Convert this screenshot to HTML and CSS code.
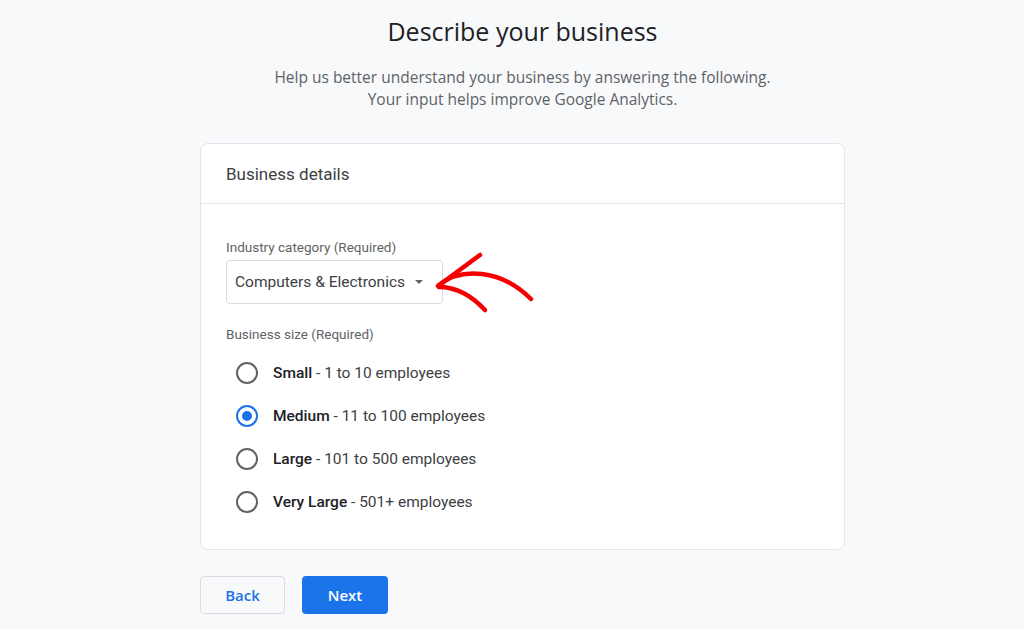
FILE: index.html
```html
<!DOCTYPE html>
<html lang="en">
<head>
    <meta charset="UTF-8">
    <meta name="viewport" content="width=device-width, initial-scale=1.0">
    <title>Describe your business</title>
    <link rel="stylesheet" href="styles.css">
</head>
<body>
    <div class="page">
        <!-- Intro -->
        <header class="intro">
            <h1>Describe your business</h1>
            <p>Help us better understand your business by answering the following.<br>Your input helps improve Google Analytics.</p>
        </header>

        <!-- Business details card -->
        <section class="card">
            <div class="card-header">Business details</div>
            <div class="card-body">
                <div class="field-label">Industry category (Required)</div>
                <div class="select-row">
                    <div class="select-box">
                        <span>Computers &amp; Electronics</span>
                        <span class="caret"></span>
                    </div>
                    <svg class="annotation" width="110" height="70" viewBox="0 0 110 70">
                        <path d="M49 8 L7 39" />
                        <path d="M8 38 C 30 20, 70 22, 100 52" />
                        <path d="M8 40 C 25 40, 40 48, 54 63" />
                    </svg>
                </div>

                <div class="field-label size-label">Business size (Required)</div>
                <ul class="radio-list">
                    <li class="radio-item"><span class="radio"></span><span><b>Small</b> - 1 to 10 employees</span></li>
                    <li class="radio-item"><span class="radio checked"></span><span><b>Medium</b> - 11 to 100 employees</span></li>
                    <li class="radio-item"><span class="radio"></span><span><b>Large</b> - 101 to 500 employees</span></li>
                    <li class="radio-item"><span class="radio"></span><span><b>Very Large</b> - 501+ employees</span></li>
                </ul>
            </div>
        </section>

        <!-- Actions -->
        <div class="actions">
            <button class="btn btn-back">Back</button>
            <button class="btn btn-next">Next</button>
        </div>
    </div>
</body>
</html>
```

FILE: styles.css
```css
/* General */
body {
    margin: 0;
    background-color: #f8f9fa;
    font-family: Roboto, 'Noto Sans', sans-serif;
    color: #202124;
}

.page {
    width: 645px;
    margin-left: calc(50% - 312px);
    padding-top: 13px;
}

/* Intro */
.intro {
    text-align: center;
}

.intro h1 {
    margin: 0;
    font-family: 'Open Sans', Roboto, sans-serif;
    font-size: 25px;
    font-weight: 400;
    line-height: 36px;
    color: #202124;
}

.intro p {
    margin: 17px 0 0;
    font-family: 'Open Sans', Roboto, sans-serif;
    font-size: 15.5px;
    line-height: 22px;
    color: #5f6368;
}

/* Card */
.card {
    margin-top: 33px;
    background-color: #fff;
    border: 1px solid #e3e5e8;
    border-radius: 8px;
}

.card-header {
    padding: 20px 25px 19px;
    font-size: 17px;
    line-height: 20px;
    color: #3c4043;
    border-bottom: 1px solid #e3e5e8;
}

.card-body {
    padding: 35px 25px 26px;
}

.field-label {
    font-size: 13.5px;
    line-height: 16px;
    color: #5f6368;
}

.select-row {
    display: flex;
    align-items: flex-start;
    margin-top: 5px;
}

.select-box {
    display: flex;
    align-items: center;
    gap: 10px;
    height: 42px;
    padding: 0 19px 0 8px;
    border: 1px solid #dadce0;
    border-radius: 4px;
    font-size: 15.5px;
    color: #3c4043;
}

.caret {
    width: 0;
    height: 0;
    border-left: 4px solid transparent;
    border-right: 4px solid transparent;
    border-top: 4px solid #5f6368;
}

.annotation {
    margin: -13px 0 0 -12px;
}

.annotation path {
    fill: none;
    stroke: #f40000;
    stroke-width: 4.5;
    stroke-linecap: round;
}

.size-label {
    margin-top: 9px;
}

/* Radios */
.radio-list {
    list-style-type: none;
    margin: 9px 0 0;
    padding: 0;
}

.radio-item {
    display: flex;
    align-items: center;
    gap: 15px;
    height: 43px;
    padding-left: 10px;
    font-size: 15.5px;
    color: #3c4043;
}

.radio-item b {
    font-weight: 500;
    color: #202124;
}

.radio {
    box-sizing: border-box;
    width: 22px;
    height: 22px;
    border: 2px solid #5f6368;
    border-radius: 50%;
    display: flex;
    align-items: center;
    justify-content: center;
}

.radio.checked {
    border-color: #1a73e8;
}

.radio.checked::after {
    content: '';
    width: 10px;
    height: 10px;
    border-radius: 50%;
    background-color: #1a73e8;
}

/* Actions */
.actions {
    display: flex;
    gap: 17px;
    margin-top: 26px;
}

.btn {
    height: 38px;
    border-radius: 4px;
    font-family: 'Open Sans', Roboto, sans-serif;
    font-size: 15px;
    font-weight: 600;
    cursor: pointer;
}

.btn-back {
    width: 85px;
    background-color: #f8f9fa;
    border: 1px solid #dadce0;
    color: #1a73e8;
}

.btn-next {
    width: 86px;
    background-color: #1a73e8;
    border: none;
    color: #fff;
}
```
